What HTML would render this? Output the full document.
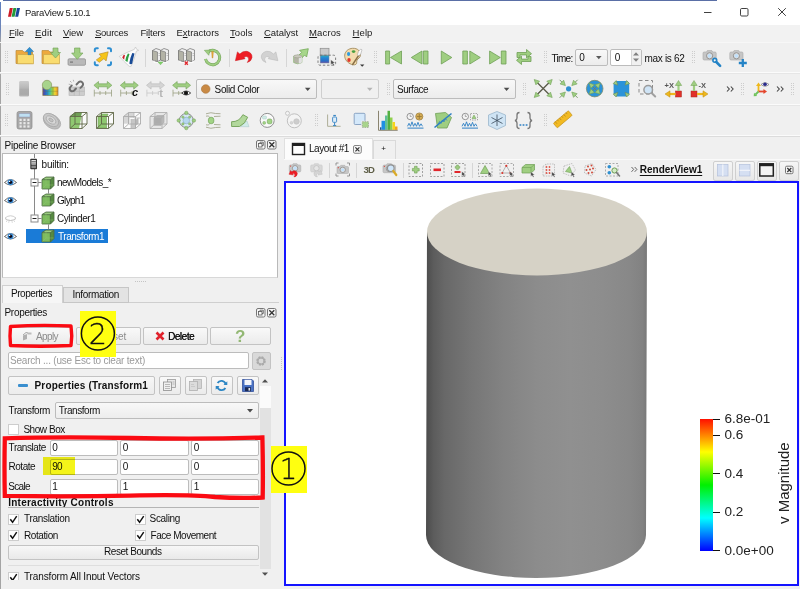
<!DOCTYPE html>
<html><head><meta charset="utf-8"><title>ParaView 5.10.1</title>
<style>
*{box-sizing:border-box;margin:0;padding:0}
html,body{width:800px;height:589px;overflow:hidden;background:#f0f0f0}
body{position:relative;font-family:"Liberation Sans","Noto Sans CJK JP",sans-serif;font-size:11px;color:#000}
.a{position:absolute}
svg{position:absolute;overflow:visible}
.t{position:absolute;white-space:nowrap;line-height:1;color:#111}
.t u{text-decoration-thickness:1px;text-underline-offset:1px}
.hl{position:absolute;left:0;width:800px;height:1px;background:#fbfbfb}
.in{position:absolute;background:#fff;border:1px solid #bcbcbc;border-radius:2px}
.btn{position:absolute;background:linear-gradient(#f9f9f9,#ebebeb);border:1px solid #c3c3c3;border-radius:2px}
.cb{position:absolute;width:11px;height:11px;background:#fff;border:1px solid #cdcdcd}
.hd{position:absolute;width:3.300px;height:13px;background:repeating-linear-gradient(#cdcdcd 0,#cdcdcd 1px,transparent 1px,transparent 2.150px) 0 0/1px 100% no-repeat,repeating-linear-gradient(#cdcdcd 0,#cdcdcd 1px,transparent 1px,transparent 2.150px) 2.200px 0/1px 100% no-repeat}
.sep{position:absolute;width:1px;height:18px;background:#d6d6d6}
</style></head><body>
<div class="a" style="left:0;top:0;width:800px;height:25px;background:#fff"></div>
<div class="a" style="left:3px;top:0;width:714px;height:1px;background:#5a6fa6"></div>
<div class="a" style="left:0;top:2px;width:1px;height:587px;background:linear-gradient(#5f7fc0 0,#6f86b8 28px,#a4a4a4 40px,#a4a4a4 100%)"></div>
<svg style="left:8px;top:8px" width="12" height="9" viewBox="0 0 12 9"><path d="M1.800 0h3L3 8.700H0z" fill="#cc1a24"/><path d="M5.400 0h3L6.600 8.700h-3z" fill="#229a3a"/><path d="M9 0h3L10.200 8.700h-3z" fill="#17459a"/></svg>
<svg style="left:700px;top:0" width="100" height="25" viewBox="700 0 100 25"><g stroke="#2a2a2a" stroke-width=".9" fill="none"><path d="M704 12.500h7.500"/><rect x="740.500" y="8.500" width="7.500" height="7.500" rx="1.200"/><path d="M778.200 8.200l7.600 7.600M785.800 8.200l-7.600 7.600"/></g></svg>
<div class="a" style="left:1px;top:25px;width:799px;height:17px;background:#f2f2f2"></div>
<div class="t" style="left:25px;top:8px;font-size:9.5px;letter-spacing:-0.28px;color:#1a1a1a">ParaView 5.10.1</div>
<div class="t" style="left:9px;top:28px;font-size:9.5px;letter-spacing:-0.08px;color:#1a1a1a"><u>F</u>ile</div>
<div class="t" style="left:35px;top:28px;font-size:9.5px;letter-spacing:0.16px;color:#1a1a1a"><u>E</u>dit</div>
<div class="t" style="left:63px;top:28px;font-size:9.5px;letter-spacing:-0.1px;color:#1a1a1a"><u>V</u>iew</div>
<div class="t" style="left:95px;top:28px;font-size:9.5px;letter-spacing:-0.26px;color:#1a1a1a"><u>S</u>ources</div>
<div class="t" style="left:140.5px;top:28px;font-size:9.5px;letter-spacing:-0.19px;color:#1a1a1a">Fi<u>l</u>ters</div>
<div class="t" style="left:176.5px;top:28px;font-size:9.5px;letter-spacing:-0.03px;color:#1a1a1a">E<u>x</u>tractors</div>
<div class="t" style="left:230px;top:28px;font-size:9.5px;letter-spacing:0.06px;color:#1a1a1a"><u>T</u>ools</div>
<div class="t" style="left:264px;top:28px;font-size:9.5px;letter-spacing:-0.04px;color:#1a1a1a"><u>C</u>atalyst</div>
<div class="t" style="left:309px;top:28px;font-size:9.5px;letter-spacing:0.14px;color:#1a1a1a"><u>M</u>acros</div>
<div class="t" style="left:352.5px;top:28px;font-size:9.5px;letter-spacing:0.12px;color:#1a1a1a"><u>H</u>elp</div>
<div class="hl" style="top:42px;background:#f7f7f7"></div>
<div class="hl" style="top:72px"></div><div class="hl" style="top:73px;background:#e6e6e6"></div>
<div class="hl" style="top:104px"></div><div class="hl" style="top:105px;background:#e6e6e6"></div>
<div class="hl" style="top:135px"></div><div class="hl" style="top:136px;background:#dcdcdc"></div>

<!-- p_tb1 -->
<div class="hd" style="left:5px;top:51px"></div><div class="sep" style="left:144.5px;top:48.5px"></div><div class="sep" style="left:228.5px;top:48.5px"></div><div class="sep" style="left:285.5px;top:48.5px"></div><div class="hd" style="left:373.5px;top:51px"></div><div class="hd" style="left:544px;top:51px"></div><div class="hd" style="left:692px;top:51px"></div>
<svg style="left:0;top:42px" width="800" height="31" viewBox="0 42 800 31">
<g><path d="M16 50.500h6.500l1.500 1.500h8.500v11.500H16z" fill="#eda93d" stroke="#b98a3a" stroke-width=".7"/><path d="M17.500 54.500h16v9.300h-16z" fill="#f9dc70" stroke="#c9a548" stroke-width=".7"/><path d="M29.500 47.300l4 4.200h-2.500v3.200h-3v-3.200h-2.500z" fill="#2f8fcf" stroke="#2273ad" stroke-width=".5"/></g>
<g><path d="M42 50.500h6.500l1.500 1.500h8.500v11.500H42z" fill="#eda93d" stroke="#b98a3a" stroke-width=".7"/><path d="M43.500 54.500h16v9.300h-16z" fill="#f9dc70" stroke="#c9a548" stroke-width=".7"/><path d="M53 48h5v4.500h2.500l-5 5.500-5-5.500H53z" fill="#9fce81" stroke="#6f9f55" stroke-width=".6"/></g>
<g><rect x="68" y="58.800" width="17.500" height="6.500" rx="1.200" fill="#b9b9b9" stroke="#8d8d8d" stroke-width=".7"/><rect x="70" y="61.500" width="3" height="1.200" fill="#777"/><path d="M74.500 48h5.500v5h3l-5.700 6.300-5.700-6.300h2.900z" fill="#9fce81" stroke="#6f9f55" stroke-width=".6"/></g>
<g fill="none" stroke="#2e8fd2" stroke-width="2" stroke-linecap="round"><path d="M94.800 51.300v-1.300q0-1.700 1.700-1.700h1.300M108 48.300h1.300q1.700 0 1.700 1.700v1.300M111 62.300v1.300q0 1.700-1.700 1.700H108M97.800 65.300h-1.300q-1.700 0-1.700-1.700v-1.300"/></g><path d="M108.200 51.800l-2.100 9.200-2.200-2.300-4.600 3.600-3-2.400 4.800-3.500-2-2.300z" fill="#f6c417" stroke="#b48c2c" stroke-width=".6" stroke-linejoin="round"/>
<g><path d="M119.300 56.400q8-4.500 15-7l1.200-2.400 1.200 2.300 2 1-2.300 .8q-2.200 8.400-5.300 15.200q-1.800 .6-2.800-.8q-5-4.500-9-9.100z" fill="#fbfbfb" stroke="#bcbcbc" stroke-width=".6" stroke-linejoin="round"/><path d="M122.300 57.800q.6-2.300 1.800-3l.9 .5q-.8 2.800-.8 4.500z" fill="#cc1f2a"/><path d="M125.300 60.800q.8-4.500 2.600-7.200l1.600 .5q-1.400 3.800-2 8z" fill="#2ba043"/><path d="M129.300 63.500q.8-6 3-10.600l2.200 .6q-1.500 5.600-2.300 10.300q-1.500 .8-2.900-.3z" fill="#184a96"/></g>
<g><path d="M152.5 50.500l3.500-2 4.500 1.500v10l-3 1.500-5-1.500z" fill="#efefef" stroke="#6e6e6e" stroke-width=".7" stroke-linejoin="round"/><path d="M152.5 50.500l5 1.500v9.500l-5-1.500z" fill="#b3b3a6" stroke="#6e6e6e" stroke-width=".6" stroke-linejoin="round"/><path d="M158.5 53.500h1.500M158.5 55.500h1.500" stroke="#9a9a9a" stroke-width=".5"/><path d="M160.5 50.500l3.500-2 4.500 1.500v10l-3 1.500-5-1.500z" fill="#efefef" stroke="#6e6e6e" stroke-width=".7" stroke-linejoin="round"/><path d="M160.5 50.500l5 1.500v9.500l-5-1.500z" fill="#b3b3a6" stroke="#6e6e6e" stroke-width=".6" stroke-linejoin="round"/><path d="M166.5 53.500h1.500M166.5 55.500h1.500" stroke="#9a9a9a" stroke-width=".5"/><path d="M154 60.500v2h13v-2" fill="none" stroke="#fafafa" stroke-width="1"/><path d="M158 62l2.500 2.800 2.500-2.800z" fill="#7fd06a" stroke="#6fb85a" stroke-width=".5"/></g>
<g><path d="M178.5 50.500l3.500-2 4.500 1.500v10l-3 1.500-5-1.500z" fill="#efefef" stroke="#6e6e6e" stroke-width=".7" stroke-linejoin="round"/><path d="M178.5 50.500l5 1.500v9.500l-5-1.500z" fill="#b3b3a6" stroke="#6e6e6e" stroke-width=".6" stroke-linejoin="round"/><path d="M184.5 53.500h1.500M184.5 55.500h1.500" stroke="#9a9a9a" stroke-width=".5"/><path d="M186.5 50.500l3.500-2 4.500 1.500v10l-3 1.500-5-1.500z" fill="#efefef" stroke="#6e6e6e" stroke-width=".7" stroke-linejoin="round"/><path d="M186.5 50.500l5 1.500v9.500l-5-1.500z" fill="#b3b3a6" stroke="#6e6e6e" stroke-width=".6" stroke-linejoin="round"/><path d="M192.5 53.500h1.500M192.5 55.500h1.500" stroke="#9a9a9a" stroke-width=".5"/><path d="M180 60.500v2h13v-2" fill="none" stroke="#fafafa" stroke-width="1"/><path d="M184.800 61.500l3 3.200M187.800 61.500l-3 3.200" stroke="#e0262c" stroke-width="1.300"/></g>
<g><path d="M208.200 51.800A7.200 7.200 0 1 1 205.500 59" fill="none" stroke="#6f9f55" stroke-width="2.900"/><path d="M208.200 51.800A7.200 7.200 0 1 1 205.500 59" fill="none" stroke="#9fce81" stroke-width="1.900"/><path d="M204.300 50.300l5.800-.3-1.300 5.300z" fill="#9fce81" stroke="#6f9f55" stroke-width=".5"/><path d="M211.600 51.500h1.800l-.5 6.500h-.8z" fill="#e8a93a" stroke="#c08a28" stroke-width=".4"/></g>
<path d="M235.400 60.700L237.400 51.900L239.800 54Q243 50.500 247 51.300Q252.300 52.800 252 57.500Q251.200 61.500 247.300 62.500Q249.500 59.500 248.300 57.600Q246.800 55.600 244 57L245 58.700Z" fill="#ee1c24" stroke="#c8161c" stroke-width=".5" stroke-linejoin="round"/>
<path d="M235.400 60.700L237.400 51.900L239.800 54Q243 50.500 247 51.300Q252.300 52.800 252 57.500Q251.200 61.500 247.300 62.500Q249.500 59.500 248.300 57.600Q246.800 55.600 244 57L245 58.700Z" transform="translate(513.300 0) scale(-1 1)" fill="#d2d2d2" stroke="#b4b4b4" stroke-width=".5" stroke-linejoin="round"/>
<g><path d="M308.300 48.700l-1.700 8.300-2-2-3.800 4.200-3.300-2.800 4.200-4-2.100-2.100z" fill="#a6d68a" stroke="#74aa58" stroke-width=".8" stroke-linejoin="round"/><path d="M293.600 56.300q4-2.300 8.300 0v6.200q-4.200 2.700-8.300 0z" fill="#b4b4a6" stroke="#8fb878" stroke-width=".7"/><path d="M298.800 57.300l3.100-1v6.200l-3.100 1.300z" fill="#e2e2e2"/><ellipse cx="297.750" cy="56.300" rx="4.100" ry="1.500" fill="#c9c9bd" stroke="#8a8a7a" stroke-width=".4"/></g>
<defs><linearGradient id="gbx" x1="0" x2="0" y1="55" y2="63" gradientUnits="userSpaceOnUse"><stop offset="0" stop-color="#2fb5b0"/><stop offset=".35" stop-color="#2487d6"/><stop offset=".75" stop-color="#2a6cc4"/><stop offset="1" stop-color="#6a55a8"/></linearGradient></defs><g><rect x="320.200" y="48.300" width="8.800" height="6.900" fill="#cacaca" stroke="#8c8c8c" stroke-width=".7"/><rect x="320.200" y="55.200" width="8.800" height="7.800" fill="url(#gbx)" stroke="#7a8aa0" stroke-width=".5"/><rect x="318" y="55.200" width="17.600" height="10" rx="2" fill="none" stroke="#707070" stroke-width=".9" stroke-dasharray="2.400 1.800"/><path d="M330.800 59.800v5l1.300-1.200 1.300 2.200 1-.6-1.200-2.100h1.800z" fill="#4a4a4a" stroke="#f0f0f0" stroke-width=".3"/></g>
<g><path d="M352.500 48.300c5.200-.3 8.400 3 8 7c-.3 2.500-2.600 3.300-3.400 4.700c-.9 1.500 .3 3.400-1.300 4.400c-1.500 .9-4 .3-5.800-.7c-3.600-2-5.600-5.300-5.300-8.600c.4-4 3.800-6.500 7.800-6.800z" fill="#f3dcae" stroke="#98804f" stroke-width=".8"/><ellipse cx="348.600" cy="54" rx="1.600" ry="2" fill="#2e9be0"/><ellipse cx="353.600" cy="51.600" rx="1.800" ry="1.400" fill="#4aa040"/><ellipse cx="349" cy="60" rx="1.700" ry="2" fill="#e2362c"/><path d="M359.300 54.500l-7 10.500" stroke="#8a6f45" stroke-width="1.400"/><path d="M360.800 49l1.200 .8-1.400 4.700-2.300 1.300-1-.9 1.200-3.500z" fill="#fafafa" stroke="#9a9a9a" stroke-width=".5"/><path d="M360 64.500h4.400l-2.200 2.300z" fill="#3a3a3a"/></g>
<g fill="#9fce81" stroke="#6f9f55" stroke-width=".8" stroke-linejoin="round"><path d="M385.6 51h4v13h-4z"/><path d="M401.5 51V64L390.5 57.500z"/><path d="M422 51V64L411.3 57.500z"/><path d="M423.4 51h4.6v13h-4.6z"/><path d="M441.3 51V64L451.8 57.500z"/><path d="M462.8 51h4.6v13h-4.6z"/><path d="M469.8 51V64L480.3 57.500z"/><path d="M489.6 51V64L500.3 57.500z"/><path d="M501.3 51h4.7v13h-4.7z"/><path d="M517 57.500v-5h9.500v-3l5 4.200-5 4.200v-3h-6.500v2.600z"/><path d="M531 56.500v5h-9.500v3l-5-4.200 5-4.200v3h6.500v-2.600z"/></g>
<g transform="translate(703 50)"><path d="M1.200 2h2.300l.8-1.400h4.600l.8 1.400h2.300q1.200 0 1.200 1.200v5.600q0 1.200-1.200 1.200H1.200Q0 10 0 8.800V3.200Q0 2 1.200 2z" fill="#c6c6c6" stroke="#a8a8a8" stroke-width=".6"/><circle cx="6.600" cy="5.800" r="3.100" fill="#e0e0e0" stroke="#8c8c8c" stroke-width=".9"/><circle cx="6.600" cy="5.800" r="1.900" fill="#c0e0fb"/></g><circle cx="714.800" cy="60.300" r="1.900" fill="#f4f4f4" stroke="#2483c6" stroke-width="1.600"/><path d="M716.300 62l3.800 3.800" stroke="#2483c6" stroke-width="2.600" stroke-linecap="round"/>
<g transform="translate(729.8 50)"><path d="M1.200 2h2.300l.8-1.400h4.600l.8 1.400h2.300q1.200 0 1.200 1.200v5.600q0 1.200-1.200 1.200H1.200Q0 10 0 8.800V3.200Q0 2 1.200 2z" fill="#c6c6c6" stroke="#a8a8a8" stroke-width=".6"/><circle cx="6.600" cy="5.800" r="3.100" fill="#e0e0e0" stroke="#8c8c8c" stroke-width=".9"/><circle cx="6.600" cy="5.800" r="1.900" fill="#c0e0fb"/></g><path d="M742.800 59v8M738.800 63h8" stroke="#2483c6" stroke-width="2.300"/>
</svg>
<div class="t" style="left:551.5px;top:54px;font-size:10px;letter-spacing:-0.73px">Time:</div>
<div class="in" style="left:575px;top:48.500px;width:32.500px;height:17px;background:linear-gradient(#f8f8f8,#ececec)"></div><div class="t" style="left:579.3px;top:53px;font-size:10px">0</div><svg style="left:595.500px;top:56px" width="6" height="4" viewBox="0 0 6 4"><path d="M0 0h5.600L2.800 3.200z" fill="#5a5a5a"/></svg>
<div class="in" style="left:609.500px;top:48.500px;width:32px;height:17px"></div><div class="a" style="left:630.500px;top:49.500px;width:10px;height:15px;background:#f0f0f0;border-left:1px solid #d8d8d8"></div><div class="t" style="left:614.8px;top:53px;font-size:10px">0</div><svg style="left:633px;top:52px" width="6" height="10" viewBox="0 0 6 10"><path d="M0 3.500L3 .3l3 3.200zM0 6.500l3 3.200 3-3.200z" fill="#808080"/></svg>
<div class="t" style="left:644.5px;top:54px;font-size:10px;letter-spacing:-0.32px">max is 62</div>

<!-- p_tb2 -->
<div class="hd" style="left:5.5px;top:82.5px"></div><div class="hd" style="left:386.8px;top:82.5px"></div><div class="hd" style="left:523px;top:82.5px"></div><div class="hd" style="left:741.3px;top:82.5px"></div><div class="hd" style="left:791.3px;top:82.5px"></div>
<div class="in" style="left:196px;top:79px;width:120.500px;height:19.500px;background:linear-gradient(#f8f8f8,#ececec)"></div><div class="in" style="left:321px;top:79px;width:57.500px;height:19.500px;background:#f0f0f0;border-color:#cfcfcf"></div><div class="in" style="left:393px;top:79px;width:123px;height:19.500px;background:linear-gradient(#f8f8f8,#ececec)"></div>
<svg style="left:0;top:73px" width="800" height="31" viewBox="0 73 800 31">
<defs><linearGradient id="gr1" x1="0" x2="0" y1="81.500" y2="96.500" gradientUnits="userSpaceOnUse"><stop offset="0" stop-color="#cbcbcb"/><stop offset=".45" stop-color="#b6b6b6"/><stop offset=".5" stop-color="#adadad"/><stop offset=".85" stop-color="#a9a9a9"/><stop offset="1" stop-color="#bababa"/></linearGradient><linearGradient id="gr2" x1="43" x2="58" y1="0" y2="0" gradientUnits="userSpaceOnUse"><stop offset="0" stop-color="#5a3f9a"/><stop offset=".2" stop-color="#2b6fc8"/><stop offset=".4" stop-color="#2cb7c9"/><stop offset=".6" stop-color="#8ecf4c"/><stop offset=".8" stop-color="#f2d330"/><stop offset="1" stop-color="#e98a25"/></linearGradient></defs>
<rect x="19.200" y="81" width="9.800" height="15.500" rx="1.200" fill="url(#gr1)"/>
<rect x="42.800" y="87" width="15.200" height="8.500" fill="url(#gr2)" stroke="#8a8450" stroke-width=".7"/><path d="M47.800 87v8.500M53 87v8.500M42.800 91.300h15.200" stroke="#6a6a3a" stroke-width=".5" opacity=".6"/><circle cx="47" cy="85" r="4.700" fill="#a8d48c" stroke="#8a9a60" stroke-width=".7"/>
<rect x="69" y="87" width="15.500" height="8.500" fill="#cdcdcd" stroke="#b4b4b4" stroke-width=".6"/><path d="M74.200 87v8.500M79.400 87v8.500M69 91.300h15.500" stroke="#b2b2b2" stroke-width=".6"/><g fill="none" stroke="#6e6e6e" stroke-width="1.900" stroke-linecap="round"><path d="M76.500 84.500l2-2.200q2-1.800 3.800 0q1.600 1.800 0 3.700l-1.800 1.900"/><path d="M76 88.500l-1.800 2q-2 1.700-3.700 0q-1.700-1.900 0-3.700l1.300-1.400"/></g><path d="M71.500 82.500l-1.500-1.500M73.700 81.500l-.4-1.700M70.500 84.500l-1.800-.3" stroke="#9a9a9a" stroke-width=".7"/>
<path d="M93.9 85.300l4.600-3.800v2.300h8.800v-2.300l4.600 3.800-4.600 3.800v-2.300h-8.800v2.300z" fill="#9fce81" stroke="#6f9f55" stroke-width=".6" stroke-linejoin="round"/><path d="M94.3 93h17.2M94.3 89.700v6.800M100 91v4M105.7 91v4M111.5 89.700v6.800" stroke="#99a082" stroke-width=".8" fill="none"/><path d="M120.3 85.300l4.600-3.800v2.300h8.800v-2.300l4.600 3.800-4.600 3.800v-2.300h-8.800v2.300z" fill="#9fce81" stroke="#6f9f55" stroke-width=".6" stroke-linejoin="round"/><path d="M120.7 93h12M120.7 89.700v6.800M126.4 91v4M132.1 91v4" stroke="#99a082" stroke-width=".8" fill="none"/><path d="M146.5 85.300l4.600-3.800v2.300h8.800v-2.300l4.600 3.800-4.600 3.800v-2.300h-8.800v2.300z" fill="#d4d4d4" stroke="#b8b8b8" stroke-width=".6" stroke-linejoin="round"/><path d="M146.9 93h12M146.9 89.700v6.800M152.6 91v4M158.3 91v4" stroke="#c6c6c6" stroke-width=".8" fill="none"/><path d="M172.6 85.300l4.600-3.800v2.300h8.800v-2.300l4.600 3.800-4.600 3.800v-2.300h-8.800v2.300z" fill="#9fce81" stroke="#6f9f55" stroke-width=".6" stroke-linejoin="round"/><path d="M173 93h12M173 89.700v6.800M178.7 91v4M184.4 91v4" stroke="#99a082" stroke-width=".8" fill="none"/>
<text x="132" y="96.300" font-family="Liberation Sans, sans-serif" font-weight="bold" font-style="italic" font-size="11" fill="#111">c</text><text x="159.300" y="96.500" font-family="Liberation Sans, sans-serif" font-weight="bold" font-size="11" fill="#b4b4b4">t</text><path d="M181.700 93q4.500-4 9 0q-4.500 4-9 0z" fill="#fff" stroke="#222" stroke-width=".8"/><circle cx="186" cy="93" r="2.100" fill="#111"/>
<path d="M536.2 81.5L550.2 95.5M550.2 81.5L536.2 95.5" stroke="#5a5a4a" stroke-width="1.300"/><path d="M552.2 97.5L546.83 95.8L550.5 92.13z" fill="#9fce81" stroke="#6f9f55" stroke-width=".6"/><path d="M552.2 79.5L550.5 84.87L546.83 81.2z" fill="#9fce81" stroke="#6f9f55" stroke-width=".6"/><path d="M534.2 97.5L535.9 92.13L539.57 95.8z" fill="#9fce81" stroke="#6f9f55" stroke-width=".6"/><path d="M534.2 79.5L539.57 81.2L535.9 84.87z" fill="#9fce81" stroke="#6f9f55" stroke-width=".6"/>
<circle cx="568.6" cy="88.8" r="2.600" fill="#2f8fd0"/><path d="M577.6 97.8L573.6 93.8" stroke="#7a9a6a" stroke-width="1"/><path d="M571.8 92L577.17 93.7L573.5 97.37z" fill="#9fce81" stroke="#6f9f55" stroke-width=".6"/><path d="M577.6 79.8L573.6 83.8" stroke="#7a9a6a" stroke-width="1"/><path d="M571.8 85.6L573.5 80.23L577.17 83.9z" fill="#9fce81" stroke="#6f9f55" stroke-width=".6"/><path d="M559.6 97.8L563.6 93.8" stroke="#7a9a6a" stroke-width="1"/><path d="M565.4 92L563.7 97.37L560.03 93.7z" fill="#9fce81" stroke="#6f9f55" stroke-width=".6"/><path d="M559.6 79.8L563.6 83.8" stroke="#7a9a6a" stroke-width="1"/><path d="M565.4 85.6L560.03 83.9L563.7 80.23z" fill="#9fce81" stroke="#6f9f55" stroke-width=".6"/>
<circle cx="594.7" cy="88.6" r="8.300" fill="#2b93d9" stroke="#7f8a6a" stroke-width=".8"/><path d="M591.7 85.6l6 6M597.7 85.6l-6 6" stroke="#6f7f6a" stroke-width=".9"/><path d="M600.3 94.2L594.93 92.5L598.6 88.83z" fill="#9fce81" stroke="#6f9f55" stroke-width=".6"/><path d="M600.3 83L598.6 88.37L594.93 84.7z" fill="#9fce81" stroke="#6f9f55" stroke-width=".6"/><path d="M589.1 94.2L590.8 88.83L594.47 92.5z" fill="#9fce81" stroke="#6f9f55" stroke-width=".6"/><path d="M589.1 83L594.47 84.7L590.8 88.37z" fill="#9fce81" stroke="#6f9f55" stroke-width=".6"/>
<rect x="613.6" y="81" width="15.600" height="15.600" rx="3.500" fill="#2b93d9"/><path d="M625 92.4L629.6 94L626.6 97z" fill="#9fce81" stroke="#6f8a55" stroke-width=".6"/><path d="M625 85.2L629.6 83.6L626.6 80.6z" fill="#9fce81" stroke="#6f8a55" stroke-width=".6"/><path d="M617.8 92.4L613.2 94L616.2 97z" fill="#9fce81" stroke="#6f8a55" stroke-width=".6"/><path d="M617.8 85.2L613.2 83.6L616.2 80.6z" fill="#9fce81" stroke="#6f8a55" stroke-width=".6"/>
<rect x="639" y="80.500" width="13.500" height="13.500" fill="none" stroke="#8a8a8a" stroke-width="1" stroke-dasharray="3.500 2.500"/><circle cx="648.200" cy="89.700" r="4.300" fill="#cfe4f6" stroke="#9c9c9c" stroke-width="1.500"/><path d="M651.600 93.100l3.600 3.400" stroke="#a0a0a0" stroke-width="2" stroke-linecap="round"/>
<rect x="675.500" y="91" width="6" height="6" fill="#e1302a" stroke="#a82a20" stroke-width=".5"/><path d="M678.500 91v-6" stroke="#9fce81" stroke-width="2.200"/><path d="M675.300 85.500l3.200-5 3.200 5z" fill="#9fce81" stroke="#6f9f55" stroke-width=".5"/><path d="M675.500 94h-6" stroke="#efb81c" stroke-width="2.200"/><path d="M670 90.800l-5 3.200 5 3.200z" fill="#efb81c" stroke="#b98a18" stroke-width=".5"/><text x="664.500" y="87.500" font-family="Liberation Sans, sans-serif" font-weight="bold" font-size="7.500" fill="#555">+X</text>
<rect x="691" y="91" width="6" height="6" fill="#e1302a" stroke="#a82a20" stroke-width=".5"/><path d="M694 91v-6" stroke="#9fce81" stroke-width="2.200"/><path d="M690.800 85.500l3.200-5 3.200 5z" fill="#9fce81" stroke="#6f9f55" stroke-width=".5"/><path d="M697 94h6" stroke="#efb81c" stroke-width="2.200"/><path d="M703 90.800l5 3.200-5 3.200z" fill="#efb81c" stroke="#b98a18" stroke-width=".5"/><text x="698.500" y="87.500" font-family="Liberation Sans, sans-serif" font-weight="bold" font-size="7.500" fill="#555">-X</text>
<path d="M727 86.500l2.300 2.500-2.300 2.500M730.8 86.500l2.300 2.500-2.300 2.500" fill="none" stroke="#444" stroke-width="1.100"/><path d="M777 86.500l2.300 2.500-2.300 2.500M780.8 86.500l2.300 2.500-2.300 2.500" fill="none" stroke="#444" stroke-width="1.100"/><path d="M758.500 91.500v-6" stroke="#efb81c" stroke-width="1.800"/><path d="M756 86l2.500-3.500 2.500 3.500z" fill="#efb81c"/><path d="M758.500 91.500h5.500" stroke="#e4472e" stroke-width="1.800"/><path d="M763.500 89l3.500 2.500-3.500 2.500z" fill="#e4472e"/><path d="M758.500 91.500l-3 3" stroke="#6fc25a" stroke-width="1.800"/><path d="M754 92.800l-.3 3.500 3.500-.3z" fill="#6fc25a"/><path d="M761 84.500q4-3.500 8 0q-4 3.500-8 0z" fill="#eef" stroke="#777" stroke-width=".7"/><circle cx="765" cy="84.300" r="1.800" fill="#2a2a8a"/>
<circle cx="205.700" cy="89" r="4.300" fill="#c98a45" stroke="#a8743a" stroke-width=".6"/><path d="M304.900 87.800h5.600l-2.800 3.200z" fill="#4c4c4c"/><path d="M367 87.800h5.600l-2.800 3.200z" fill="#b4b4b4"/><path d="M503.800 87.800h5.600l-2.800 3.200z" fill="#4c4c4c"/></svg>
<div class="t" style="left:214.6px;top:85px;font-size:10px;letter-spacing:-0.38px">Solid Color</div><div class="t" style="left:397px;top:85px;font-size:10px;letter-spacing:-0.49px">Surface</div>

<!-- p_tb3 -->
<div class="hd" style="left:5px;top:114px"></div><div class="hd" style="left:315px;top:114px"></div><div class="hd" style="left:544px;top:114px"></div>
<svg style="left:0;top:105px" width="800" height="31" viewBox="0 105 800 31">
<rect x="17" y="111.500" width="15" height="17.500" rx="2" fill="#a9a9a9" stroke="#8a8a8a" stroke-width=".7"/><rect x="19" y="113.500" width="11" height="3.500" fill="#bfe0f2" stroke="#88a" stroke-width=".4"/><rect x="19.5" y="118.8" width="2.200" height="2.200" fill="#e8e8e8"/><rect x="23.4" y="118.8" width="2.200" height="2.200" fill="#e8e8e8"/><rect x="27.3" y="118.8" width="2.200" height="2.200" fill="#e8e8e8"/><rect x="19.5" y="122.1" width="2.200" height="2.200" fill="#e8e8e8"/><rect x="23.4" y="122.1" width="2.200" height="2.200" fill="#e8e8e8"/><rect x="27.3" y="122.1" width="2.200" height="2.200" fill="#e8e8e8"/><rect x="19.5" y="125.4" width="2.200" height="2.200" fill="#e8e8e8"/><rect x="23.4" y="125.4" width="2.200" height="2.200" fill="#e8e8e8"/><rect x="27.3" y="125.4" width="2.200" height="2.200" fill="#e8e8e8"/>
<g fill="#c9c9c9" stroke="#a5a5a5" stroke-width=".7"><ellipse cx="52" cy="121.500" rx="9.500" ry="6.500" transform="rotate(35 52 121.500)" fill="#bdbdbd"/><ellipse cx="51" cy="120" rx="8.500" ry="5.500" transform="rotate(35 51 120)"/><ellipse cx="51" cy="120" rx="5.500" ry="3.300" transform="rotate(35 51 120)" fill="#d8d8d8"/><ellipse cx="51" cy="120" rx="2.500" ry="1.400" transform="rotate(35 51 120)" fill="#c2c2c2"/></g>
<g transform="translate(69.5 112)" fill="none" stroke="#5f6645" stroke-width=".9"><path d="M.5 4.500L5.500 .5h12v11.500l-5 4.500H.5z" fill="#fbfbfb" stroke="none"/><path d="M.5 4.500L5.500 .5h7l-1 4z" fill="#6f9f55" stroke="none"/><path d="M.5 4.500h11.500l-2.500 12H.5z" fill="#8fc870" stroke="none"/><path d="M.5 4.500L5.500 .5h12v11.500l-5 4.500H.5z"/><path d="M.5 4.500h12v12M12.500 4.500l5-4M5.500 .5v11.500h12M5.500 12l-5 4.500"/></g>
<g transform="translate(96 112)" fill="none" stroke="#5f6645" stroke-width=".9"><path d="M.5 4.500L5.500 .5h12v11.500l-5 4.500H.5z" fill="#fbfbfb" stroke="none"/><path d="M2 5l3.500-3h6.500l-1.500 3.500v10.500H2z" fill="#8fc870" stroke="#6f9f55" stroke-width=".6"/><path d="M.5 4.500L5.500 .5h12v11.500l-5 4.500H.5z"/><path d="M.5 4.500h12v12M12.500 4.500l5-4M5.500 .5v11.500h12M5.500 12l-5 4.500"/></g>
<g transform="translate(123 112)" fill="none" stroke="#ababab" stroke-width=".9"><path d="M.5 4.500L5.500 .5h12v11.500l-5 4.500H.5z" fill="#fbfbfb" stroke="none"/><path d="M.5 4.500L5.500 .5h5.500v5.500H6v4.500H.5z" fill="#d6d6d6" stroke="none"/><path d="M8 7h5v9.500H8z" fill="#c6c6c6" stroke="none"/><path d="M12.500 8l3-2.500v6l-3 2.500z" fill="#b8b8b8" stroke="none"/><path d="M6 6v5H.5M11 .5v5.500h6.500M8 7v9.500" stroke="#b4b4b4" stroke-width=".7"/><path d="M.5 4.500L5.500 .5h12v11.500l-5 4.500H.5z"/><path d="M.5 4.500h12v12M12.500 4.500l5-4M5.500 .5v11.500h12M5.500 12l-5 4.500"/></g>
<g transform="translate(149.5 112)" fill="none" stroke="#b0b0b0" stroke-width=".9"><path d="M.5 4.500L5.500 .5h12v11.500l-5 4.500H.5z" fill="#fbfbfb" stroke="none"/><path d="M.5 4.500L5.500 .5h12v11.500l-5 4.500H.5z" fill="#e6e6e6" stroke="none"/><path d="M4.500 6l3-2.500h7v7l-3 2.500h-7z" fill="#bdbdbd" stroke="#a4a4a4" stroke-width=".6"/><path d="M4.500 6h7v7.500M11.500 6l3-2.500" stroke="#a0a0a0" stroke-width=".6"/><path d="M4.500 6h7v7.500h-7z" fill="#acacac" stroke="none"/><path d="M.5 4.500L5.500 .5h12v11.500l-5 4.500H.5z"/><path d="M.5 4.500h12v12M12.500 4.500l5-4M5.500 .5v11.500h12M5.500 12l-5 4.500"/></g>
<circle cx="186.3" cy="120.5" r="7" fill="#d6e8f4" stroke="#8a8a8a" stroke-width="1"/><circle cx="186.3" cy="120.5" r="3.300" fill="#b6d8ee" stroke="#88a8c0" stroke-width=".6"/><circle cx="186.3" cy="112.9" r="1.700" fill="#9fce81" stroke="#6f9f55" stroke-width=".5"/><circle cx="186.3" cy="128.1" r="1.700" fill="#9fce81" stroke="#6f9f55" stroke-width=".5"/><circle cx="178.7" cy="120.5" r="1.700" fill="#9fce81" stroke="#6f9f55" stroke-width=".5"/><circle cx="193.9" cy="120.5" r="1.700" fill="#9fce81" stroke="#6f9f55" stroke-width=".5"/><circle cx="182.9" cy="117.1" r="1.200" fill="#9fce81" stroke="#6f9f55" stroke-width=".4"/><circle cx="189.7" cy="117.1" r="1.200" fill="#9fce81" stroke="#6f9f55" stroke-width=".4"/><circle cx="182.9" cy="123.9" r="1.200" fill="#9fce81" stroke="#6f9f55" stroke-width=".4"/><circle cx="189.7" cy="123.9" r="1.200" fill="#9fce81" stroke="#6f9f55" stroke-width=".4"/>
<g fill="none" stroke="#9c9e84" stroke-width=".8"><path d="M206 113.800q5-2 9.500-.3l5 .2M206 116.200q2.500-.8 3.500 .6M214 116.500l6.500-.3M206 124.800q2.500 .8 3.500-.6M214 124.500l6.500 .3M206 127.200q5 2 9.500 .3l5-.2"/></g><rect x="208.400" y="117.300" width="5.400" height="6.400" rx="2.400" fill="#a2d486" stroke="#6f9f55" stroke-width=".7"/>
<path d="M240.500 126.700l6.500-5.700 2 5.700z" fill="#d0ece8" stroke="#a8c4c8" stroke-width=".5"/><path d="M231.600 126.500v-4.800q7.500 .3 11.300-7l4.800 2.600q-2.500 6.500-8.200 9.200z" fill="#b2d89c" stroke="#6f9f55" stroke-width=".9" stroke-linejoin="round"/>
<circle cx="267.200" cy="120.400" r="7" fill="#fafafa" stroke="#909090" stroke-width="1"/><rect x="262.500" y="116" width="4" height="3" rx="1" fill="#cfeae4" stroke="#a0c4c0" stroke-width=".4"/><rect x="267.300" y="119" width="4.600" height="4.800" rx="1.600" fill="#a2d486" stroke="#6f9f55" stroke-width=".6"/><rect x="262.800" y="121.500" width="2.800" height="2.800" rx="1" fill="#a2d486" stroke="#6f9f55" stroke-width=".4"/>
<circle cx="294.300" cy="120.800" r="7" fill="#f4f4f4" stroke="#c0c0c0" stroke-width="1"/><circle cx="287.500" cy="113.300" r="2" fill="#f4f4f4" stroke="#c0c0c0" stroke-width=".9"/><circle cx="296.500" cy="121.500" r="2.800" fill="#cdcdcd" stroke="#bdbdbd" stroke-width=".5"/><circle cx="291.500" cy="122.800" r="1.400" fill="#d6d6d6" stroke="#c0c0c0" stroke-width=".5"/>
<path d="M327.600 114.500v11.800h13" fill="none" stroke="#aeae98" stroke-width="1"/><path d="M333.300 115.500h2.600" stroke="#3a86c4" stroke-width="1.200"/><rect x="332.600" y="117" width="4" height="5.300" rx=".8" fill="#dcedfa" stroke="#3a86c4" stroke-width=".9"/><path d="M334.600 122.500v3M333 125.600h3.200" stroke="#3a86c4" stroke-width="1"/>
<rect x="354.200" y="113.300" width="10.800" height="11.200" rx="1" fill="#d4e8fa" stroke="#8aa4c4" stroke-width="1"/><rect x="361.300" y="120.800" width="8" height="7.400" fill="#f0f0f0"/><rect x="362.300" y="121.700" width="6.200" height="5.700" fill="#a8d48c" stroke="#909a88" stroke-width=".7" stroke-dasharray="1.400 1"/>
<rect x="380" y="127.300" width="1.500" height="2.600" fill="#1f4f9a"/><rect x="381.500" y="120.800" width="3.500" height="9.100" fill="#1f8fe4"/><rect x="385" y="115.500" width="2.500" height="14.400" fill="#5fbf9a"/><rect x="387.500" y="110.800" width="2.500" height="19.100" fill="#52b043"/><rect x="390" y="117.500" width="2.500" height="12.400" fill="#8fd04c"/><rect x="392.500" y="122" width="2.500" height="7.900" fill="#f6d51c"/><rect x="395" y="126.500" width="2.500" height="3.400" fill="#f4a41e"/><path d="M378.500 110.800v19.500h19.200" fill="none" stroke="#8a8470" stroke-width="1"/>
<circle cx="410.2" cy="116.5" r="3.200" fill="#f4f4f4" stroke="#8a8a8a" stroke-width=".9"/><path d="M410.2 116.5v-2M410.2 116.5h1.500" stroke="#8a8a8a" stroke-width=".7"/><circle cx="419.300" cy="116.500" r="3.600" fill="#d4ac54" stroke="#9a7a3a" stroke-width=".7"/><path d="M416.800 116.500h5M419.300 114v5" stroke="#9a7a3a" stroke-width=".9"/><path d="M407.5 126.3l1.500-3 1.500 3 1.500-4.500 1.500 4.500 1.500-3 1.500 3 1.500-4 1.500 4 1.500-2.500 1.500 2.500" fill="none" stroke="#2d7fc4" stroke-width=".9"/><path d="M407.5 128.1h16" stroke="#2d7fc4" stroke-width="1"/>
<path d="M435.500 113.500l10-1 6 5-4.500 10.500-9.500 0z" fill="#9fce81" stroke="#6f9f55" stroke-width=".8"/><path d="M434.500 127.500l17-14" stroke="#2d7fc4" stroke-width="1.600"/><path d="M438 124.500l1.500-3 1.500 2 1.500-3.500 1.500 2 1.500-3.500 1.500 2" fill="none" stroke="#2d7fc4" stroke-width=".7"/>
<circle cx="465.3" cy="116.5" r="3.200" fill="#f4f4f4" stroke="#8a8a8a" stroke-width=".9"/><path d="M465.3 116.5v-2M465.3 116.5h1.500" stroke="#8a8a8a" stroke-width=".7"/><rect x="470.500" y="113.500" width="7" height="6.500" fill="none" stroke="#8a8a8a" stroke-width=".7" stroke-dasharray="1.500 1"/><path d="M472 118.500l2-3.500 2 3.500z" fill="#9fce81" stroke="#6f9f55" stroke-width=".5"/><path d="M462 126.3l1.500-3 1.500 3 1.500-4.500 1.500 4.500 1.500-3 1.500 3 1.500-4 1.500 4 1.500-2.500 1.500 2.500" fill="none" stroke="#2d7fc4" stroke-width=".9"/><path d="M462 128.1h16" stroke="#2d7fc4" stroke-width="1"/>
<path d="M497 111.500l8.500 3.500v10.500l-8.500 4-8.500-4V115z" fill="#cfe4f4" stroke="#9ab6cc" stroke-width=".8"/><path d="M497 114.500v11.500M491.500 117.500l11 6M502.500 117.500l-11 6" stroke="#3a4a5a" stroke-width=".8"/>
<path d="M519.500 112.500q-2.500 0-2.500 2.500v3q0 2-2 2.500q2 .5 2 2.500v3q0 2.500 2.500 2.500M527.500 112.500q2.500 0 2.500 2.500v3q0 2 2 2.500q-2 .5-2 2.500v3q0 2.500-2.500 2.500" fill="none" stroke="#777" stroke-width="1.300"/><path d="M519.500 125h1.800M522.600 125h1.800M525.700 125h1.800" stroke="#2d7fc4" stroke-width="1.700"/>
<g transform="rotate(-40 562.800 119.300)"><rect x="553" y="116.300" width="19.600" height="6" rx=".8" fill="#f2ba22" stroke="#c8941a" stroke-width=".7"/><path d="M555.500 116.300v2.600M558.300 116.300v1.800M561.100 116.300v2.600M563.900 116.300v1.800M566.700 116.300v2.600M569.500 116.300v1.800" stroke="#b4821a" stroke-width=".7"/></g>
</svg>

<!-- p_left -->
<div class="t" style="left:4.5px;top:141px;font-size:10px;letter-spacing:-0.25px">Pipeline Browser</div>
<svg style="left:256px;top:140px" width="21" height="10" viewBox="0 0 21 10"><rect x=".5" y=".5" width="8.500" height="8.500" rx="1.500" fill="#f6f6f6" stroke="#666" stroke-width=".9"/><rect x="2.500" y="3.500" width="3.500" height="3.500" fill="none" stroke="#555" stroke-width=".8"/><path d="M4 3.500V2.200h3.300v3.300H6" fill="none" stroke="#555" stroke-width=".8"/><rect x="11.500" y=".5" width="8.500" height="8.500" rx="1.500" fill="#f6f6f6" stroke="#666" stroke-width=".9"/><path d="M13.300 2.300l5 5M18.300 2.300l-5 5" stroke="#333" stroke-width="1.300"/></svg>
<div class="a" style="left:2px;top:153px;width:276px;height:125px;background:#fff;border:1px solid #b9b9b9;border-bottom-color:#d8d8d8"></div>
<div class="a" style="left:26px;top:229px;width:82px;height:14px;background:#1a7bd7"></div>
<svg style="left:0;top:153px" width="120" height="100" viewBox="0 153 120 100"><g stroke="#8a8a8a" stroke-width="1" fill="none"><path d="M34.500 154v4M34.500 169v10M34.500 186v29M38 182.500h3.500M38 218.500h3.500M48.500 188.500v5M48.500 224.500v5"/><rect x="31" y="179" width="7" height="7" fill="#fff"/><rect x="31" y="215" width="7" height="7" fill="#fff"/></g><path d="M32.500 182.500h4M32.500 218.500h4" stroke="#222" stroke-width="1"/><rect x="30.300" y="158.800" width="6.700" height="10.400" rx=".8" fill="#333"/><rect x="31.400" y="160" width="4.500" height="4.600" fill="#e4e4e4"/><path d="M31.400 161.500h4.500M31.400 163.100h4.500" stroke="#555" stroke-width=".7"/><rect x="31.400" y="165.600" width="4.500" height="2.500" fill="#8c8c8c"/></svg>
<svg style="left:41px;top:175.5px" width="14" height="14" viewBox="0 0 14 14"><path d="M1 3.500L5 1h8v8.500L9.500 13H1z" fill="#5d8c48"/><path d="M1 3.700L5 1.200h7.800L9.300 3.700z" fill="#9bcb80"/><path d="M1 3.700h8.300V13H1z" fill="#7dbb5e"/><path d="M9.300 3.700L12.800 1.200V9.300L9.300 13z" fill="#558a40"/><path d="M1 3.500L5 1h8v8.500L9.500 13H1zM1 3.700h8.300V13M9.300 3.700L13 1" fill="none" stroke="#4c6b42" stroke-width=".8"/><path d="M5 1.500V9L1.300 12.600M5 9h7.600" fill="none" stroke="#8fc474" stroke-width=".6" opacity=".8"/></svg>
<svg style="left:41px;top:193.3px" width="14" height="14" viewBox="0 0 14 14"><path d="M1 3.500L5 1h8v8.500L9.500 13H1z" fill="#5d8c48"/><path d="M1 3.700L5 1.200h7.800L9.300 3.700z" fill="#9bcb80"/><path d="M1 3.700h8.300V13H1z" fill="#7dbb5e"/><path d="M9.300 3.700L12.800 1.200V9.300L9.300 13z" fill="#558a40"/><path d="M1 3.500L5 1h8v8.500L9.500 13H1zM1 3.700h8.300V13M9.300 3.700L13 1" fill="none" stroke="#4c6b42" stroke-width=".8"/><path d="M5 1.500V9L1.300 12.600M5 9h7.600" fill="none" stroke="#8fc474" stroke-width=".6" opacity=".8"/></svg>
<svg style="left:41px;top:211.3px" width="14" height="14" viewBox="0 0 14 14"><path d="M1 3.500L5 1h8v8.500L9.500 13H1z" fill="#5d8c48"/><path d="M1 3.700L5 1.200h7.800L9.300 3.700z" fill="#9bcb80"/><path d="M1 3.700h8.300V13H1z" fill="#7dbb5e"/><path d="M9.300 3.700L12.800 1.200V9.300L9.300 13z" fill="#558a40"/><path d="M1 3.500L5 1h8v8.500L9.500 13H1zM1 3.700h8.300V13M9.300 3.700L13 1" fill="none" stroke="#4c6b42" stroke-width=".8"/><path d="M5 1.500V9L1.300 12.600M5 9h7.600" fill="none" stroke="#8fc474" stroke-width=".6" opacity=".8"/></svg>
<svg style="left:41px;top:229px" width="14" height="14" viewBox="0 0 14 14"><path d="M1 3.500L5 1h8v8.500L9.500 13H1z" fill="#5d8c48"/><path d="M1 3.700L5 1.200h7.800L9.300 3.700z" fill="#9bcb80"/><path d="M1 3.700h8.300V13H1z" fill="#7dbb5e"/><path d="M9.300 3.700L12.800 1.200V9.300L9.300 13z" fill="#558a40"/><path d="M1 3.500L5 1h8v8.500L9.500 13H1zM1 3.700h8.300V13M9.300 3.700L13 1" fill="none" stroke="#4c6b42" stroke-width=".8"/><path d="M5 1.500V9L1.300 12.600M5 9h7.600" fill="none" stroke="#8fc474" stroke-width=".6" opacity=".8"/></svg>
<svg style="left:4.3px;top:178px" width="13" height="9" viewBox="0 0 13 9"><path d="M.5 4.500Q6.500-1.500 12.500 4.500Q6.500 9.500 .5 4.500z" fill="#fff" stroke="#444" stroke-width=".8"/><circle cx="6.500" cy="4.300" r="3" fill="#3f8fd6"/><circle cx="6.500" cy="4.300" r="1.700" fill="#0a0a1a"/><circle cx="5.600" cy="3.400" r=".7" fill="#fff"/></svg><svg style="left:4.3px;top:195.8px" width="13" height="9" viewBox="0 0 13 9"><path d="M.5 4.500Q6.500-1.500 12.500 4.500Q6.500 9.500 .5 4.500z" fill="#fff" stroke="#444" stroke-width=".8"/><circle cx="6.500" cy="4.300" r="3" fill="#3f8fd6"/><circle cx="6.500" cy="4.300" r="1.700" fill="#0a0a1a"/><circle cx="5.600" cy="3.400" r=".7" fill="#fff"/></svg><svg style="left:4.3px;top:214px" width="13" height="9" viewBox="0 0 13 9"><path d="M1 4Q6.500-.5 12 4" fill="none" stroke="#c8c8c8" stroke-width=".9"/><path d="M1 4.500Q6.500 8.500 12 4.500" fill="none" stroke="#b4b4b4" stroke-width=".9"/><path d="M3 6.500l-.6 1.300M5 7.300l-.3 1.400M8 7.300l.3 1.400M10 6.500l.6 1.300" stroke="#bdbdbd" stroke-width=".7"/></svg><svg style="left:4.3px;top:231.5px" width="13" height="9" viewBox="0 0 13 9"><path d="M.5 4.500Q6.500-1.500 12.500 4.500Q6.500 9.500 .5 4.500z" fill="#fff" stroke="#444" stroke-width=".8"/><circle cx="6.500" cy="4.300" r="3" fill="#3f8fd6"/><circle cx="6.500" cy="4.300" r="1.700" fill="#0a0a1a"/><circle cx="5.600" cy="3.400" r=".7" fill="#fff"/></svg>
<div class="t" style="left:41.6px;top:160px;font-size:10px;letter-spacing:-0.21px">builtin:</div>
<div class="t" style="left:57px;top:178px;font-size:10px;letter-spacing:-0.55px">newModels_*</div>
<div class="t" style="left:57px;top:196px;font-size:10px;letter-spacing:-0.68px">Glyph1</div>
<div class="t" style="left:57px;top:214px;font-size:10px;letter-spacing:-0.43px">Cylinder1</div>
<div class="t" style="left:58px;top:232px;font-size:10px;letter-spacing:-0.47px;color:#fff">Transform1</div>
<div class="a" style="left:135px;top:281px;width:12px;height:1px;background-image:linear-gradient(90deg,#c4c4c4 1px,transparent 1px);background-size:2px 1px"></div>
<div class="a" style="left:2px;top:302px;width:277px;height:1px;background:#cfcfcf"></div>
<div class="a" style="left:63px;top:287px;width:66px;height:16px;background:#e3e3e3;border:1px solid #c6c6c6"></div>
<div class="a" style="left:2px;top:285px;width:61px;height:18px;background:#f6f6f6;border:1px solid #d0d0d0;border-bottom:none"></div>
<div class="t" style="left:11px;top:289px;font-size:10px;letter-spacing:-0.46px">Properties</div>
<div class="t" style="left:72.6px;top:290px;font-size:10px;letter-spacing:-0.33px">Information</div>
<div class="t" style="left:4.5px;top:308px;font-size:10px;letter-spacing:-0.31px">Properties</div>
<svg style="left:256px;top:307.5px" width="21" height="10" viewBox="0 0 21 10"><rect x=".5" y=".5" width="8.500" height="8.500" rx="1.500" fill="#f6f6f6" stroke="#666" stroke-width=".9"/><rect x="2.500" y="3.500" width="3.500" height="3.500" fill="none" stroke="#555" stroke-width=".8"/><path d="M4 3.500V2.200h3.300v3.300H6" fill="none" stroke="#555" stroke-width=".8"/><rect x="11.500" y=".5" width="8.500" height="8.500" rx="1.500" fill="#f6f6f6" stroke="#666" stroke-width=".9"/><path d="M13.300 2.300l5 5M18.300 2.300l-5 5" stroke="#333" stroke-width="1.300"/></svg>
<div class="btn" style="left:10px;top:327px;width:62px;height:18px"></div>
<div class="btn" style="left:75.500px;top:327px;width:65.500px;height:18px"></div>
<div class="btn" style="left:142.500px;top:327px;width:65px;height:18px"></div>
<div class="btn" style="left:209.500px;top:327px;width:61px;height:18px"></div>
<div class="t" style="left:36px;top:332px;font-size:10px;letter-spacing:-0.6px;color:#8c8c8c">Apply</div>
<div class="t" style="left:100.5px;top:332px;font-size:10px;letter-spacing:-0.08px;color:#8c8c8c">Reset</div>
<div class="t" style="left:168px;top:332px;font-size:10px;letter-spacing:-0.48px;text-shadow:0.3px 0 0 #111">Delete</div>
<div class="t" style="left:235px;top:328px;font-size:17px;letter-spacing:-1.38px;font-weight:bold;color:#93b874">?</div>
<svg style="left:21px;top:330px" width="12" height="12" viewBox="0 0 12 12"><path d="M2 5.500l4-1.500v5l-4 1.500z" fill="#b0b0b0"/><path d="M6.500 2.500h4v2h-4z" fill="#bcbcbc"/><path d="M2 5l3-2.500 2 0.500" fill="none" stroke="#a8a8a8"/></svg>
<svg style="left:155px;top:331px" width="10" height="10" viewBox="0 0 10 10"><path d="M1.500 1.500l7 7M8.500 1.500l-7 7" stroke="#e0222c" stroke-width="2.600"/></svg>
<div class="in" style="left:7.500px;top:352px;width:241.500px;height:16.500px"></div>
<div class="t" style="left:10px;top:356px;font-size:10px;letter-spacing:-0.21px;color:#9b9b9b">Search ... (use Esc to clear text)</div>
<div class="a" style="left:251.500px;top:352px;width:19px;height:17.500px;background:#d9d9d9;border:1px solid #c3c3c3;border-radius:2px"></div>
<svg style="left:255px;top:354.500px" width="12" height="12" viewBox="0 0 12 12"><circle cx="6" cy="6" r="3.600" fill="none" stroke="#ababab" stroke-width="2.400" stroke-dasharray="1.900 0.930"/><circle cx="6" cy="6" r="3.200" fill="none" stroke="#ababab" stroke-width="1.200"/></svg>
<div class="btn" style="left:7.500px;top:375.500px;width:147px;height:19.500px;background:linear-gradient(#f7f7f7,#ececec)"></div>
<div class="a" style="left:18px;top:383.500px;width:10px;height:3px;border-radius:1px;background:#3a8fcf"></div>
<div class="t" style="left:34.5px;top:381px;font-size:10px;letter-spacing:0.16px;font-weight:bold">Properties (Transform1</div>
<div class="btn" style="left:158.5px;top:375.500px;width:22px;height:19.500px"></div>
<div class="btn" style="left:184.5px;top:375.500px;width:22px;height:19.500px"></div>
<div class="btn" style="left:210.5px;top:375.500px;width:22px;height:19.500px"></div>
<div class="btn" style="left:236.5px;top:375.500px;width:22px;height:19.500px"></div>
<svg style="left:163px;top:379px" width="13" height="12" viewBox="0 0 13 12"><rect x="4.500" y=".5" width="8" height="8" fill="#e8e8e8" stroke="#9a9a9a" stroke-width=".8"/><rect x=".5" y="3" width="8" height="8.500" fill="#efefef" stroke="#8e8e8e" stroke-width=".8"/><path d="M2 5.500h5M2 7.500h5M2 9.500h5M9.500 3h2M9.500 5h2" stroke="#a0a0a0" stroke-width=".7"/></svg>
<svg style="left:189px;top:379px" width="13" height="12" viewBox="0 0 13 12"><rect x="4.500" y=".5" width="8" height="9" fill="#d4d4d4" stroke="#b4b4b4" stroke-width=".8"/><rect x=".5" y="2.500" width="8" height="9" fill="#dcdcdc" stroke="#b0b0b0" stroke-width=".8"/><path d="M2 5.500h3M2 7.500h4" stroke="#c0c0c0" stroke-width=".7"/></svg>
<svg style="left:215px;top:379px" width="13" height="13" viewBox="0 0 13 13"><path d="M10.600 5A4.400 4.400 0 0 0 2.600 4" fill="none" stroke="#2c86c4" stroke-width="1.900"/><path d="M2.400 8A4.400 4.400 0 0 0 10.400 9" fill="none" stroke="#2c86c4" stroke-width="1.900"/><path d="M12.300 2.200v3.800h-3.800zM.7 10.800v-3.800h3.800z" fill="#2c86c4"/></svg>
<svg style="left:241.500px;top:379px" width="12" height="13" viewBox="0 0 12 13"><path d="M.5.500h9.500l1.500 1.500v10.500h-11z" fill="#4a72c4" stroke="#34509a" stroke-width=".8"/><rect x="2.500" y=".8" width="7" height="5.200" fill="#f4f6fb"/><rect x="3" y="8.200" width="6" height="4" fill="#1b2a55"/><rect x="6.500" y="9" width="1.600" height="2.600" fill="#e8e8e8"/></svg>
<div class="a" style="left:259.500px;top:375px;width:11px;height:205px;background:#f0f0f0"></div>
<div class="a" style="left:259.500px;top:386px;width:11px;height:22px;background:#fbfbfb"></div>
<div class="a" style="left:259.500px;top:408px;width:11px;height:161px;background:#e2e2e2"></div>
<svg style="left:262px;top:378.500px" width="6" height="4" viewBox="0 0 6 4"><path d="M0 3.500L3 .3l3 3.200z" fill="#505050"/></svg>
<svg style="left:262px;top:572px" width="6" height="4" viewBox="0 0 6 4"><path d="M0 .5L3 3.700l3-3.200z" fill="#505050"/></svg>
<div class="t" style="left:8.6px;top:406px;font-size:10px;letter-spacing:-0.42px">Transform</div>
<div class="in" style="left:54.500px;top:401.500px;width:204px;height:17px;background:linear-gradient(#f8f8f8,#ededed)"></div>
<div class="t" style="left:58.7px;top:406px;font-size:10px;letter-spacing:-0.43px">Transform</div>
<svg style="left:246.500px;top:408.500px" width="6" height="4" viewBox="0 0 6 4"><path d="M0 0h6L3 3.600z" fill="#4a4a4a"/></svg>
<div class="cb" style="left:8px;top:424px"></div>
<div class="t" style="left:23.4px;top:425px;font-size:10px;letter-spacing:-0.45px">Show Box</div>
<div class="t" style="left:8.6px;top:443px;font-size:10px;letter-spacing:-0.45px">Translate</div>
<div class="t" style="left:8.6px;top:462px;font-size:10px;letter-spacing:-0.51px">Rotate</div>
<div class="t" style="left:8.2px;top:482px;font-size:10px;letter-spacing:-0.64px">Scale</div>
<div class="in" style="left:49.5px;top:439.5px;width:68px;height:16.500px"></div><div class="t" style="left:52.2px;top:443px;font-size:10px;letter-spacing:-0.86px">0</div>
<div class="in" style="left:120px;top:439.5px;width:68.5px;height:16.500px"></div><div class="t" style="left:122.7px;top:443px;font-size:10px;letter-spacing:-0.86px">0</div>
<div class="in" style="left:191px;top:439.5px;width:68px;height:16.500px"></div><div class="t" style="left:193.7px;top:443px;font-size:10px;letter-spacing:-0.86px">0</div>
<div class="in" style="left:49.5px;top:458.5px;width:68px;height:16.500px"></div><div class="t" style="left:52.2px;top:462px;font-size:10px;letter-spacing:-0.86px">90</div>
<div class="in" style="left:120px;top:458.5px;width:68.5px;height:16.500px"></div><div class="t" style="left:122.7px;top:462px;font-size:10px;letter-spacing:-0.86px">0</div>
<div class="in" style="left:191px;top:458.5px;width:68px;height:16.500px"></div><div class="t" style="left:193.7px;top:462px;font-size:10px;letter-spacing:-0.86px">0</div>
<div class="in" style="left:49.5px;top:478.5px;width:68px;height:16.500px"></div><div class="t" style="left:52.2px;top:482px;font-size:10px;letter-spacing:-0.86px">1</div>
<div class="in" style="left:120px;top:478.5px;width:68.5px;height:16.500px"></div><div class="t" style="left:122.7px;top:482px;font-size:10px;letter-spacing:-0.86px">1</div>
<div class="in" style="left:191px;top:478.5px;width:68px;height:16.500px"></div><div class="t" style="left:193.7px;top:482px;font-size:10px;letter-spacing:-0.86px">1</div>
<div class="t" style="left:8.2px;top:498px;font-size:10px;letter-spacing:0.25px;font-weight:bold">Interactivity Controls</div>
<div class="a" style="left:8px;top:507px;width:251px;height:1px;background:#b4b4b4"></div>
<div class="cb" style="left:8.4px;top:513.5px"></div><svg style="left:8.4px;top:513.5px" width="11" height="11" viewBox="0 0 11 11"><path d="M2.300 5.200L4.600 8.300L8.700 2.200" fill="none" stroke="#111" stroke-width="1.500"/></svg><div class="t" style="left:24px;top:514px;font-size:10px;letter-spacing:-0.3px">Translation</div>
<div class="cb" style="left:8.4px;top:530px"></div><svg style="left:8.4px;top:530px" width="11" height="11" viewBox="0 0 11 11"><path d="M2.300 5.200L4.600 8.300L8.700 2.200" fill="none" stroke="#111" stroke-width="1.500"/></svg><div class="t" style="left:24px;top:531px;font-size:10px;letter-spacing:-0.41px">Rotation</div>
<div class="cb" style="left:135.4px;top:513.5px"></div><svg style="left:135.4px;top:513.5px" width="11" height="11" viewBox="0 0 11 11"><path d="M2.300 5.200L4.600 8.300L8.700 2.200" fill="none" stroke="#111" stroke-width="1.500"/></svg><div class="t" style="left:149.6px;top:514px;font-size:10px;letter-spacing:-0.34px">Scaling</div>
<div class="cb" style="left:135.4px;top:530px"></div><svg style="left:135.4px;top:530px" width="11" height="11" viewBox="0 0 11 11"><path d="M2.300 5.200L4.600 8.300L8.700 2.200" fill="none" stroke="#111" stroke-width="1.500"/></svg><div class="t" style="left:150.6px;top:531px;font-size:10px;letter-spacing:-0.48px">Face Movement</div>
<div class="btn" style="left:8px;top:544.500px;width:250.500px;height:15px;background:linear-gradient(#f7f7f7,#e9e9e9)"></div>
<div class="t" style="left:104px;top:547px;font-size:10px;letter-spacing:-0.44px">Reset Bounds</div>
<div class="a" style="left:8px;top:564.500px;width:251px;height:1px;background:#dedede"></div>
<div class="a" style="left:0;top:566px;width:259px;height:14px;overflow:hidden"><div class="cb" style="left:8.4px;top:5.5px"></div><svg style="left:8.4px;top:5.5px" width="11" height="11" viewBox="0 0 11 11"><path d="M2.300 5.200L4.600 8.300L8.700 2.200" fill="none" stroke="#111" stroke-width="1.500"/></svg><div class="t" style="left:24px;top:6px;font-size:10px;letter-spacing:-0.14px">Transform All Input Vectors</div></div>
<div class="a" style="left:280.500px;top:357px;width:1px;height:13px;background-image:linear-gradient(#c4c4c4 1px,transparent 1px);background-size:1px 2px"></div>

<!-- p_view -->
<div class="a" style="left:284px;top:138px;width:89px;height:22px;background:#fcfcfc;border:1px solid #e0e0e0;border-bottom:none"></div>
<div class="a" style="left:373px;top:140px;width:23px;height:20px;background:#f0f0f0;border:1px solid #d9d9d9;border-bottom:none"></div>
<div class="a" style="left:284px;top:159px;width:516px;height:1px;background:#fafafa"></div>
<svg style="left:291px;top:141px" width="16" height="16" viewBox="0 0 16 16"><rect x="1.500" y="2.500" width="12" height="11" fill="#fff" stroke="#222" stroke-width="1.400"/><rect x="1" y="2" width="13" height="3" fill="#222"/></svg>
<svg style="left:352.500px;top:145px" width="9" height="9" viewBox="0 0 9 9"><rect x=".5" y=".5" width="7.800" height="7.800" rx="1.500" fill="#f6f6f6" stroke="#777" stroke-width=".9"/><path d="M2.400 2.400l4 4M6.400 2.400l-4 4" stroke="#333" stroke-width="1.200"/></svg>
<div class="a" style="left:284px;top:181px;width:515px;height:405px;background:#fff;border:2px solid #1414ff"></div>
<svg style="left:286px;top:183px" width="511" height="401" viewBox="286 183 511 401">
<defs>
<linearGradient id="cyl" x1="427" x2="647" y1="0" y2="0" gradientUnits="userSpaceOnUse">
<stop offset="0" stop-color="#4e4e4e"/><stop offset=".03" stop-color="#5c5c5c"/><stop offset=".08" stop-color="#686868"/><stop offset=".2" stop-color="#767676"/><stop offset=".35" stop-color="#838383"/><stop offset=".5" stop-color="#8c8c8c"/><stop offset=".65" stop-color="#909090"/><stop offset=".8" stop-color="#8d8d8d"/><stop offset=".92" stop-color="#888"/><stop offset=".98" stop-color="#828282"/><stop offset="1" stop-color="#787878"/>
</linearGradient>
<linearGradient id="lut" x1="0" x2="0" y1="419" y2="551" gradientUnits="userSpaceOnUse">
<stop offset="0" stop-color="#ff1000"/><stop offset=".25" stop-color="#ffff00"/><stop offset=".5" stop-color="#00f000"/><stop offset=".75" stop-color="#00ffff"/><stop offset="1" stop-color="#0000ff"/>
</linearGradient>
</defs>
<path d="M427 232 L426 535 A110 43 0 0 0 646 535 L647 232 Z" fill="url(#cyl)"/>
<ellipse cx="537" cy="232" rx="110" ry="43.400" fill="#d6d2c6"/>
<rect x="700" y="419" width="13" height="132" fill="url(#lut)"/>
<g stroke="#111" stroke-width="1"><path d="M713 419.500h7M713 435.500h7M713 473.500h7M713 512.500h7M713 550.500h7"/></g>
<g font-family="Liberation Sans, sans-serif" font-size="13.500" fill="#222">
<text x="724.500" y="423">6.8e-01</text><text x="724.500" y="439">0.6</text><text x="724.500" y="477.500">0.4</text><text x="724.500" y="516">0.2</text><text x="724.500" y="554.500">0.0e+00</text>
<text transform="translate(788.500 524) rotate(-90)" font-size="15">v Magnitude</text>
</g>
</svg>
<div class="t" style="left:309px;top:144px;font-size:10px;letter-spacing:-0.44px">Layout #1</div>
<div class="t" style="left:381.3px;top:145px;font-size:8px">+</div>

<!-- p_vtb -->
<div class="sep" style="left:329px;top:163px;height:15px"></div><div class="sep" style="left:355.5px;top:163px;height:15px"></div><div class="sep" style="left:402.5px;top:163px;height:15px"></div><div class="sep" style="left:471.5px;top:163px;height:15px"></div>
<div class="btn" style="left:712.5px;top:160.500px;width:20.500px;height:20px;background:linear-gradient(#f6f6f6,#e8e8e8);border-color:#cfcfcf"></div><div class="btn" style="left:734.5px;top:160.500px;width:20.500px;height:20px;background:linear-gradient(#f6f6f6,#e8e8e8);border-color:#cfcfcf"></div><div class="btn" style="left:756.5px;top:160.500px;width:20.500px;height:20px;background:linear-gradient(#f6f6f6,#e8e8e8);border-color:#cfcfcf"></div><div class="btn" style="left:778.5px;top:160.500px;width:20.500px;height:20px;background:linear-gradient(#f6f6f6,#e8e8e8);border-color:#cfcfcf"></div>
<svg style="left:280px;top:160px" width="520" height="22" viewBox="280 160 520 22">
<g transform="translate(289.3 163.2) scale(0.87)"><path d="M1.200 2h2.300l.8-1.400h4.600l.8 1.400h2.300q1.200 0 1.200 1.200v5.600q0 1.200-1.200 1.200H1.200Q0 10 0 8.800V3.200Q0 2 1.200 2z" fill="#c6c6c6" stroke="#a8a8a8" stroke-width=".6"/><circle cx="6.600" cy="5.800" r="3.100" fill="#e4e4e4" stroke="#8c8c8c" stroke-width=".9"/><circle cx="6.600" cy="5.800" r="1.900" fill="#c0e0fb"/><circle cx="1.500" cy="3.300" r=".7" fill="#e0463c"/></g><path d="M289 174.300l1.500-3.800 1.300 1.200q2.300-1.800 4.500-.3q1.900 1.700 .6 4q-1.100 1.500-3 1.500q1.300-1.200 .8-2.500q-.8-1.300-2.200-.5l1 1.200z" fill="#ee1c24" stroke="#c8161c" stroke-width=".4" stroke-linejoin="round"/>
<g transform="translate(310.7 163.2) scale(0.87)"><path d="M1.200 2h2.300l.8-1.400h4.600l.8 1.400h2.300q1.200 0 1.200 1.200v5.600q0 1.200-1.200 1.200H1.200Q0 10 0 8.800V3.200Q0 2 1.200 2z" fill="#d8d8d8" stroke="#c6c6c6" stroke-width=".6"/><circle cx="6.600" cy="5.800" r="3.100" fill="#e4e4e4" stroke="#c0c0c0" stroke-width=".9"/><circle cx="6.600" cy="5.800" r="1.900" fill="#e6e6e6"/></g><path d="M322.300 174.300l-1.500-3.800-1.300 1.200q-2.300-1.800-4.500-.3q-1.900 1.700-.6 4q1.100 1.500 3 1.500q-1.300-1.200-.8-2.500q.8-1.300 2.200-.5l-1 1.200z" fill="#d4d4d4" stroke="#bcbcbc" stroke-width=".4" stroke-linejoin="round"/>
<g transform="translate(337 164.8) scale(0.87)"><path d="M1.200 2h2.300l.8-1.400h4.600l.8 1.400h2.300q1.200 0 1.200 1.200v5.600q0 1.200-1.200 1.200H1.200Q0 10 0 8.800V3.200Q0 2 1.200 2z" fill="#c6c6c6" stroke="#a8a8a8" stroke-width=".6"/><circle cx="6.600" cy="5.800" r="3.100" fill="#e4e4e4" stroke="#8c8c8c" stroke-width=".9"/><circle cx="6.600" cy="5.800" r="1.900" fill="#c0e0fb"/><circle cx="1.500" cy="3.300" r=".7" fill="#e0463c"/></g><path d="M336 165.500v-2.500h2.500M347 163h2.500v2.500M349.500 173.500v2.500H347M338.500 176h-2.500v-2.500" fill="none" stroke="#8a8a8a" stroke-width=".9"/>
<g transform="translate(383 163.2) scale(0.95)"><path d="M1.200 2h2.300l.8-1.400h4.600l.8 1.400h2.300q1.200 0 1.200 1.200v5.600q0 1.200-1.200 1.200H1.200Q0 10 0 8.800V3.200Q0 2 1.200 2z" fill="#c6c6c6" stroke="#a8a8a8" stroke-width=".6"/><circle cx="6.600" cy="5.800" r="3.100" fill="#e4e4e4" stroke="#8c8c8c" stroke-width=".9"/><circle cx="6.600" cy="5.800" r="1.900" fill="#c0e0fb"/><circle cx="1.500" cy="3.300" r=".7" fill="#e0463c"/></g><circle cx="390.800" cy="168.200" r="3.300" fill="#cfe6fa" stroke="#909090" stroke-width="1.100"/><path d="M393.300 171l3 4" stroke="#d9aa28" stroke-width="2.200" stroke-linecap="round"/>
<rect x="409" y="163.5" width="13.5" height="13" fill="none" stroke="#8c8c8c" stroke-width=".8" stroke-dasharray="2 1.500"/><path d="M414.500 166.300h2.600v2.100h2.100v2.600h-2.100v2.100h-2.600v-2.100h-2.100v-2.600h2.100z" fill="#9fce81" stroke="#6f9f55" stroke-width=".6" stroke-linejoin="round"/>
<rect x="430.5" y="163.5" width="13.5" height="13" fill="none" stroke="#8c8c8c" stroke-width=".8" stroke-dasharray="2 1.500"/><rect x="433.500" y="168.500" width="7.500" height="2.600" fill="#e0262c"/>
<rect x="451.5" y="163.5" width="13.5" height="13" fill="none" stroke="#8c8c8c" stroke-width=".8" stroke-dasharray="2 1.500"/><path d="M456.600 165h1.800v1.400h1.400v1.800h-1.400v1.400h-1.800v-1.400h-1.400v-1.800h1.400z" fill="#9fce81" stroke="#6f9f55" stroke-width=".5"/><rect x="454.500" y="171" width="6" height="2" fill="#e0262c"/><path d="M461.8 171.5v4.600l1.200-1.100 1.100 2 .9-.5-1.100-1.900h1.700z" fill="#444" stroke="#f0f0f0" stroke-width=".3"/>
<rect x="478.5" y="163.5" width="13.5" height="13" fill="none" stroke="#999" stroke-width=".8" stroke-dasharray="2 1.500"/><path d="M485 165.500l4.500 8h-9z" fill="#9fce81" stroke="#6f9f55" stroke-width=".7"/><path d="M488.3 171.5v4.600l1.200-1.100 1.100 2 .9-.5-1.100-1.900h1.700z" fill="#444" stroke="#f0f0f0" stroke-width=".3"/>
<rect x="500" y="163.5" width="13.5" height="13" fill="none" stroke="#999" stroke-width=".8" stroke-dasharray="2 1.500"/><path d="M506.300 165.500l4.200 7.500h-8.400z" fill="none" stroke="#999" stroke-width=".7"/><circle cx="506.300" cy="165.800" r="1.100" fill="#d8362e"/><circle cx="502.300" cy="173" r="1.100" fill="#d8362e"/><circle cx="510.300" cy="173" r="1.100" fill="#d8362e"/><path d="M509.8 171.5v4.600l1.200-1.100 1.100 2 .9-.5-1.100-1.900h1.700z" fill="#444" stroke="#f0f0f0" stroke-width=".3"/>
<path d="M522 167.500l3.500-3h9v5.500l-3.500 3h-9z" fill="#9fce81" stroke="#6f9f55" stroke-width=".7"/><path d="M522 167.500h9v5.500M531 167.500l3.500-3" fill="none" stroke="#6f9f55" stroke-width=".6"/><path d="M530.8 171.8v4.600l1.200-1.100 1.100 2 .9-.5-1.100-1.900h1.700z" fill="#444" stroke="#f0f0f0" stroke-width=".3"/>
<path d="M543 166.500l3-2.500h8.500v9.500l-3 2.500H543z" fill="none" stroke="#aaa" stroke-width=".7" stroke-dasharray="1.500 1"/><path d="M546 164v9.500h8.500M546 173.500l-3 2.500" fill="none" stroke="#bbb" stroke-width=".6" stroke-dasharray="1.500 1"/><circle cx="546.5" cy="167" r=".9" fill="#e0564a"/><circle cx="549.5" cy="167" r=".9" fill="#e0564a"/><circle cx="546.5" cy="170" r=".9" fill="#e0564a"/><circle cx="549.5" cy="170" r=".9" fill="#e0564a"/><circle cx="546.5" cy="173" r=".9" fill="#e0564a"/><circle cx="549.5" cy="173" r=".9" fill="#e0564a"/><path d="M551.8 171.8v4.600l1.200-1.100 1.100 2 .9-.5-1.100-1.900h1.700z" fill="#444" stroke="#f0f0f0" stroke-width=".3"/>
<path d="M564 166l8-2.500 3.500 6.500-5 6-7.500-3z" fill="none" stroke="#aaa" stroke-width=".7" stroke-dasharray="1.500 1"/><path d="M569.500 166.500l2.500 6.500-6.500-1.500z" fill="#9fce81" stroke="#6f9f55" stroke-width=".6"/><path d="M571.3 171.8v4.600l1.200-1.100 1.100 2 .9-.5-1.100-1.900h1.700z" fill="#444" stroke="#f0f0f0" stroke-width=".3"/>
<path d="M585 166l7-2.500 4 6-4.500 6.500-7-3z" fill="none" stroke="#aaa" stroke-width=".7" stroke-dasharray="1.500 1"/><circle cx="588" cy="166.5" r="1" fill="#cf4a3a"/><circle cx="591.5" cy="165.5" r="1" fill="#cf4a3a"/><circle cx="586.5" cy="170" r="1" fill="#cf4a3a"/><circle cx="590" cy="169.5" r="1" fill="#cf4a3a"/><circle cx="593" cy="168.5" r="1" fill="#cf4a3a"/><circle cx="588.5" cy="173" r="1" fill="#cf4a3a"/><circle cx="592" cy="172.5" r="1" fill="#cf4a3a"/>
<rect x="605.5" y="163.5" width="12.5" height="12.5" fill="none" stroke="#999" stroke-width=".8" stroke-dasharray="2 1.500"/><circle cx="609.300" cy="166.800" r="1.800" fill="#2f8fd0"/><circle cx="609.300" cy="172.800" r="1.800" fill="#2f8fd0"/><circle cx="614.500" cy="170.500" r="2.600" fill="#d4ecc6" stroke="#6f9f55" stroke-width="1"/><path d="M616.500 172.500l3 3.500" stroke="#777" stroke-width="1.600" stroke-linecap="round"/>
<path d="M631.500 167l2.200 2.400-2.200 2.400M634.700 167l2.200 2.400-2.200 2.400" fill="none" stroke="#555" stroke-width=".9"/>
<rect x="717.500" y="164.500" width="10.500" height="11.500" fill="#d5dff2" stroke="#b4c0dc" stroke-width=".7"/><path d="M722.800 164.500v11.500" stroke="#f2f4fa" stroke-width="1.200"/><rect x="739.500" y="164.500" width="10.500" height="11.500" fill="#d5dff2" stroke="#b4c0dc" stroke-width=".7"/><path d="M739.500 170.300h10.500" stroke="#f2f4fa" stroke-width="1.200"/><rect x="759.800" y="164" width="13.500" height="12" fill="#f4f4f4" stroke="#222" stroke-width="1.500"/><rect x="759" y="163.200" width="15" height="3" fill="#222"/><rect x="785.500" y="166.200" width="7.500" height="7.500" rx="1.300" fill="#f6f6f6" stroke="#666" stroke-width=".9"/><path d="M787.300 168l4 4M791.300 168l-4 4" stroke="#333" stroke-width="1.200"/>
</svg>
<div class="t" style="left:363.5px;top:165px;font-size:9.5px;letter-spacing:-0.72px;font-weight:bold;color:#5f5f48">3D</div>
<div class="t" style="left:639.8px;top:165px;font-size:10px;letter-spacing:-0.02px;font-weight:bold;text-decoration:underline;text-decoration-thickness:1px;text-underline-offset:1.500px">RenderView1</div>

<!-- p_annot -->
<div class="a" style="left:42.500px;top:456.500px;width:32px;height:18.500px;background:#f4f419;mix-blend-mode:multiply"></div>
<div class="a" style="left:80px;top:311px;width:36px;height:46px;background:#ffff10"></div>
<div class="a" style="left:270.500px;top:446px;width:36px;height:46.700px;background:#ffff10"></div>
<svg style="left:0;top:300px" width="320" height="210" viewBox="0 300 320 210"><circle cx="97.900" cy="333.500" r="16.500" fill="none" stroke="#111" stroke-width="1.500"/><circle cx="288.500" cy="468.500" r="16.500" fill="none" stroke="#111" stroke-width="1.500"/><text x="97.800" y="344.200" text-anchor="middle" font-family="DejaVu Sans Light, DejaVu Sans, sans-serif" font-weight="200" font-size="28.500" fill="#111" stroke="#111" stroke-width=".35">2</text><text x="288.500" y="479.300" text-anchor="middle" font-family="DejaVu Sans Light, DejaVu Sans, sans-serif" font-weight="200" font-size="27.500" fill="#111" stroke="#111" stroke-width=".3">1</text><path d="M10.500 326.500 Q40 324.500 71 326 Q72.500 336 71 345.500 Q40 347 10.500 345.500 Q9.500 336 10.500 326.500Z" fill="none" stroke="#fb0a12" stroke-width="3.400" stroke-linejoin="round"/><path d="M4.800 438.300Q60 436.500 130 438T262.400 437.500Q263.200 470 262.700 497.500Q240 498.600 215 497Q190 494.300 130 495.600T4.800 495.900Q4.200 468 4.800 438.300Z" fill="none" stroke="#fb0a12" stroke-width="4.300" stroke-linejoin="miter"/></svg>

</body></html>
